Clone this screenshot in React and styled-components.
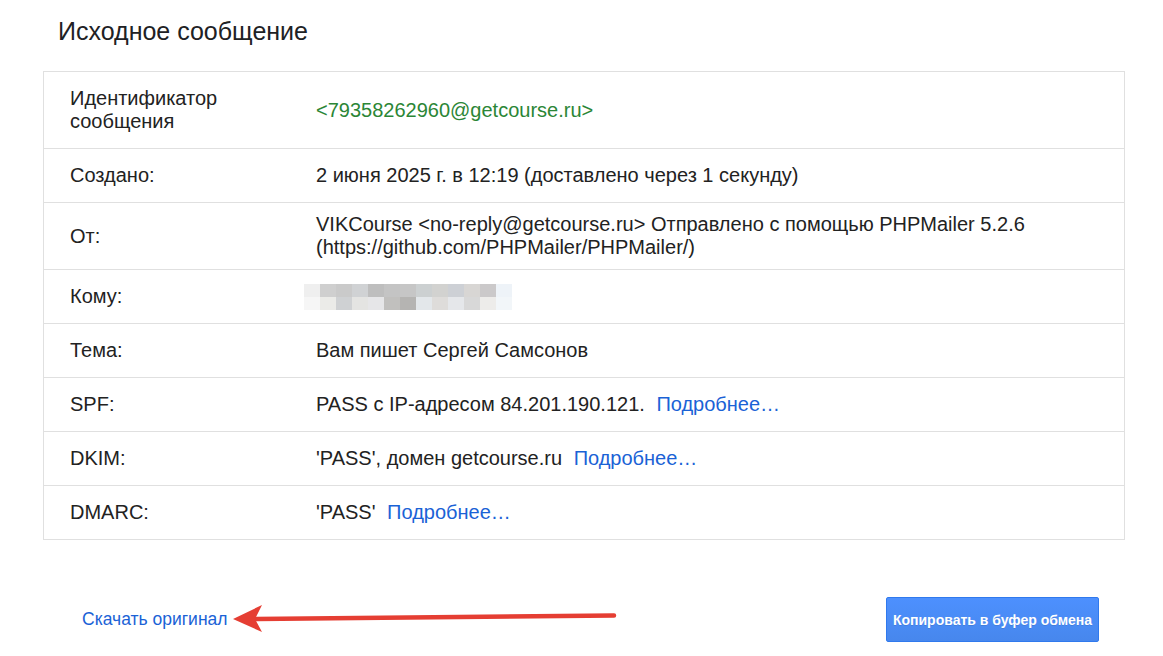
import React from 'react';
import styled, { createGlobalStyle } from 'styled-components';

const GlobalStyle = createGlobalStyle`
  html, body {
    margin: 0;
    padding: 0;
    background: #fff;
  }
  body {
    font-family: "Liberation Sans", Arial, sans-serif;
    color: #222;
  }
`;

const Page = styled.div`
  padding: 17px 38px 0 43px;
`;

const Title = styled.h1`
  margin: 0 0 25px 15px;
  font-size: 25px;
  line-height: 29px;
  font-weight: 400;
  color: #202124;
`;

const Table = styled.div`
  border: 1px solid #e0e0e0;
  border-bottom: none;
`;

const Row = styled.div`
  display: grid;
  grid-template-columns: 272px 1fr;
  align-items: center;
  border-bottom: 1px solid #e0e0e0;
  font-size: 20px;
  line-height: 23px;
`;

const Label = styled.div`
  padding: 15px 0 15px 26px;
  width: 190px;
`;

const Value = styled.div`
  padding: 10px 20px 10px 0;
  color: ${p => (p.$green ? '#2b8636' : '#222')};
`;

const MoreLink = styled.a`
  color: #1a62d6;
  text-decoration: none;
  margin-left: 6px;
  cursor: pointer;
`;

const Redacted = styled.div`
  display: grid;
  grid-template-columns: repeat(13, 16px);
  grid-auto-rows: 13px;
  margin-left: -12px;
  width: max-content;
`;

const Cell = styled.span`
  display: block;
`;

const Footer = styled.div`
  position: relative;
  display: flex;
  justify-content: space-between;
  align-items: center;
  margin-top: 57px;
  padding: 0 26px 0 39px;
`;

const DownloadLink = styled.a`
  color: #1a62d6;
  font-size: 17.5px;
  text-decoration: none;
  cursor: pointer;
`;

const CopyButton = styled.button`
  width: 213px;
  height: 45px;
  padding: 0;
  border: 1px solid #3079ed;
  border-radius: 2px;
  background: linear-gradient(#4d90fe, #4787ed);
  color: #fff;
  font-family: "Liberation Sans", Arial, sans-serif;
  font-size: 14px;
  font-weight: 700;
  white-space: nowrap;
  text-shadow: 0 1px rgba(0, 0, 0, 0.1);
  cursor: pointer;
`;

const Arrow = styled.svg`
  position: absolute;
  left: 187px;
  top: 4px;
  pointer-events: none;
`;

const redactedColors = [
  '#efefef', '#cfcfcf', '#cacaca', '#d0d2d4', '#bebebe', '#c4c4c4', '#c6c6c6',
  '#ccd0d1', '#d2d2d0', '#cdd0d5', '#d8d6d4', '#cbc9ca', '#eef3f8',
  '#f6f6f6', '#ebebe8', '#cfd1d3', '#e4e4e2', '#e6e6e8', '#c1c0be', '#b5b4b2',
  '#e3e7ea', '#dedcda', '#e5e7ea', '#d8d8d8', '#edecea', '#f2f6f9',
];

const App = () => (
  <>
    <GlobalStyle />
    <Page>
      <Title>Исходное сообщение</Title>
      <Table>
        <Row>
          <Label>Идентификатор сообщения</Label>
          <Value $green>&lt;79358262960@getcourse.ru&gt;</Value>
        </Row>
        <Row>
          <Label>Создано:</Label>
          <Value>2 июня 2025 г. в 12:19 (доставлено через 1 секунду)</Value>
        </Row>
        <Row>
          <Label>От:</Label>
          <Value>
            VIKCourse &lt;no-reply@getcourse.ru&gt; Отправлено с помощью PHPMailer 5.2.6
            (https://github.com/PHPMailer/PHPMailer/)
          </Value>
        </Row>
        <Row>
          <Label>Кому:</Label>
          <Value>
            <Redacted>
              {redactedColors.map((c, i) => (
                <Cell key={i} style={{ background: c }} />
              ))}
            </Redacted>
          </Value>
        </Row>
        <Row>
          <Label>Тема:</Label>
          <Value>Вам пишет Сергей Самсонов</Value>
        </Row>
        <Row>
          <Label>SPF:</Label>
          <Value>
            PASS с IP-адресом 84.201.190.121. <MoreLink>Подробнее…</MoreLink>
          </Value>
        </Row>
        <Row>
          <Label>DKIM:</Label>
          <Value>
            'PASS', домен getcourse.ru <MoreLink>Подробнее…</MoreLink>
          </Value>
        </Row>
        <Row>
          <Label>DMARC:</Label>
          <Value>
            'PASS' <MoreLink>Подробнее…</MoreLink>
          </Value>
        </Row>
      </Table>
      <Footer>
        <DownloadLink>Скачать оригинал</DownloadLink>
        <CopyButton>Копировать в буфер обмена</CopyButton>
        <Arrow width="390" height="36" viewBox="0 0 390 36">
          <line x1="26" y1="18" x2="384" y2="14.5" stroke="#e53e33" strokeWidth="4.5" strokeLinecap="round" />
          <path d="M3 18 L32 4 L25 18 L32 31 Z" fill="#e53e33" />
        </Arrow>
      </Footer>
    </Page>
  </>
);

export default App;
